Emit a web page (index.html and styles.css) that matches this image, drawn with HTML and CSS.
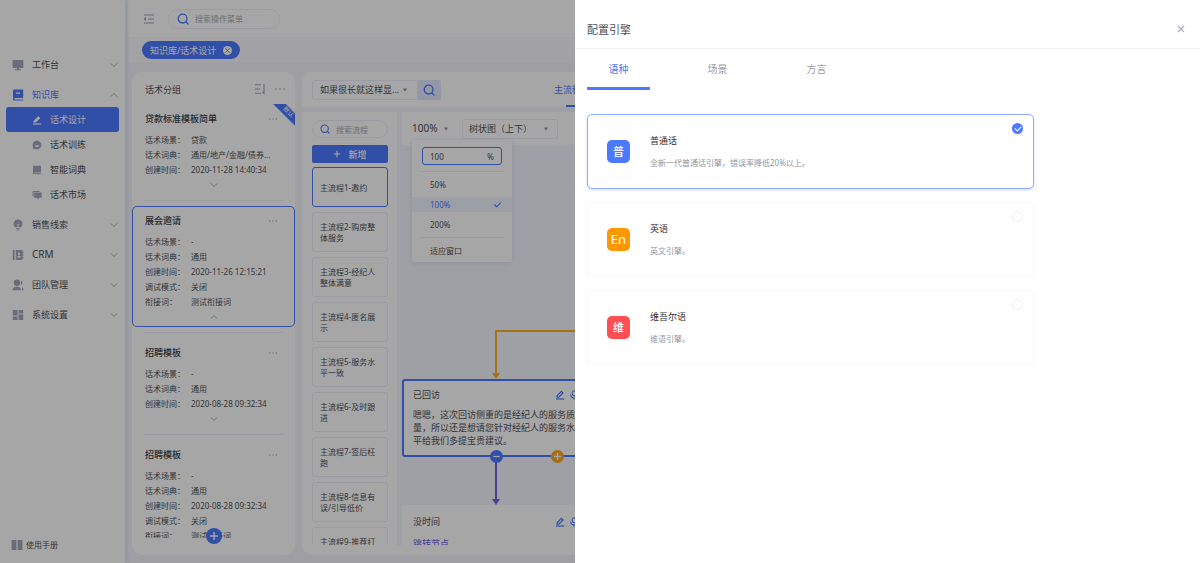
FILE: index.html
```html
<!DOCTYPE html>
<html lang="zh-CN">
<head>
<meta charset="utf-8">
<meta name="viewport" content="width=device-width, initial-scale=1">
<title>话术设计</title>
<link rel="stylesheet" href="styles.css">
</head>
<body>
<svg class="sprite" aria-hidden="true">
  <symbol id="i-down" viewBox="0 0 10 10"><path d="M2 3.5l3 3 3-3" fill="none" stroke="currentColor" stroke-width="1"/></symbol>
  <symbol id="i-up" viewBox="0 0 10 10"><path d="M2 6.5l3-3 3 3" fill="none" stroke="currentColor" stroke-width="1"/></symbol>
  <symbol id="i-search" viewBox="0 0 12 12"><circle cx="5.6" cy="5.6" r="4.4" fill="none" stroke="currentColor" stroke-width="1.3"/><path d="M9 9l2 2" stroke="currentColor" stroke-width="1.3" stroke-linecap="round"/></symbol>
  <symbol id="i-edit" viewBox="0 0 10 10"><path d="M1.5 6L6.3 1.2 8.3 3.2 3.8 7.6H1.5z" fill="currentColor"/><path d="M1 9h8.2" stroke="currentColor" stroke-width="1.2"/></symbol>
  <symbol id="i-pen" viewBox="0 0 10 10"><path d="M2 5.8L6.4 1.4 8 3 3.8 7.2H2z" fill="none" stroke="currentColor" stroke-width="1.2"/><path d="M1 9h8.2" stroke="currentColor" stroke-width="1.2"/></symbol>
  <symbol id="i-mic" viewBox="0 0 10 10"><rect x="3.3" y=".8" width="3.4" height="5" rx="1.7" fill="none" stroke="currentColor"/><path d="M1.5 4.5a3.5 3.5 0 007 0M5 8v1.6" fill="none" stroke="currentColor"/></symbol>
  <symbol id="i-dots" viewBox="0 0 12 4"><circle cx="2" cy="2" r=".8" fill="currentColor"/><circle cx="6" cy="2" r=".8" fill="currentColor"/><circle cx="10" cy="2" r=".8" fill="currentColor"/></symbol>
  <symbol id="i-caret" viewBox="0 0 6 4"><path d="M.8.6h4.4L3 3.4z" fill="currentColor"/></symbol>
  <symbol id="i-plus" viewBox="0 0 10 10"><path d="M5 1v8M1 5h8" stroke="currentColor" stroke-width="1.4"/></symbol>
  <symbol id="i-x" viewBox="0 0 10 10"><path d="M2 2l6 6M8 2l-6 6" stroke="currentColor" stroke-width="1.3"/></symbol>
  <symbol id="i-check" viewBox="0 0 10 10"><path d="M1.5 5l2.6 2.6 4.6-4.8" fill="none" stroke="currentColor" stroke-width="1.2"/></symbol>
</svg>

<div class="app">
  <aside class="sidebar">
    <nav class="nav">
      <a class="nav-row" href="#"><svg class="nav-icon" viewBox="0 0 12 12"><path d="M1.4 1h9.2a.8.8 0 01.8.8v6.4a.8.8 0 01-.8.8H7v1.2h2v1H3v-1h2V9H1.4a.8.8 0 01-.8-.8V1.8a.8.8 0 01.8-.8z" fill="currentColor"/></svg><span>工作台</span><svg class="chev"><use href="#i-down"/></svg></a>
      <a class="nav-row open" href="#"><svg class="nav-icon" viewBox="0 0 12 12"><path d="M2.4.6h8.800v8.400H2.600v1.400h8.600v1.200H2.400A1.400 1.400 0 011 10.200V2A1.400 1.400 0 012.400.6zM4 3.600v1.200h4V3.600z" fill="currentColor" fill-rule="evenodd"/></svg><span>知识库</span><svg class="chev"><use href="#i-up"/></svg></a>
      <div class="subnav">
        <a class="sub-row active" href="#"><svg class="sub-icon"><use href="#i-edit"/></svg>话术设计</a>
        <a class="sub-row" href="#"><svg class="sub-icon" viewBox="0 0 10 10"><path d="M5 .6a4.4 4.4 0 11-2.4 8.1L.8 9.2l.4-2A4.4 4.4 0 015 .6zM3 5.2a2.1 2.1 0 004.2 0z" fill="currentColor" fill-rule="evenodd"/></svg>话术训练</a>
        <a class="sub-row" href="#"><svg class="sub-icon" viewBox="0 0 10 10"><path d="M2 .8h7v6.6H2.2v.9H9v1H2A1 1 0 011 8.200V1.800A1 1 0 012 .8z" fill="currentColor"/></svg>智能词典</a>
        <a class="sub-row" href="#"><svg class="sub-icon" viewBox="0 0 10 10"><path d="M.6 1h7v1H1.600v4.500H.6z" fill="currentColor"/><path d="M2.200 2.600h7.400v5.200H7.200L6 9.200 4.800 7.800H2.200z" fill="currentColor"/></svg>话术市场</a>
      </div>
      <a class="nav-row" href="#"><svg class="nav-icon" viewBox="0 0 12 12"><path d="M6 .4a4.300 4.300 0 012.400 7.900H6.500V6l1-.9-.5-.5-1 .8-1-.8-.5.5 1 .9v2.300H3.600A4.300 4.300 0 016 .4zM4 9.200h4v1H4zM5 10.700h2v.8H5z" fill="currentColor"/></svg><span>销售线索</span><svg class="chev"><use href="#i-down"/></svg></a>
      <a class="nav-row" href="#"><svg class="nav-icon" viewBox="0 0 12 12"><path d="M.8 1h1.800v10H.8zM3.800 1h6.400v1.600h1.200v1.600h-1.200v1h1.200v1.600h-1.200v1h1.200v1.600h-1.200V11H3.800zM7 3.600a1.200 1.200 0 100 2.400 1.200 1.200 0 000-2.400zM5 8.400h4c0-2.200-4-2.200-4 0z" fill="currentColor" fill-rule="evenodd"/></svg><span class="latin">CRM</span><svg class="chev"><use href="#i-down"/></svg></a>
      <a class="nav-row" href="#"><svg class="nav-icon" viewBox="0 0 12 12"><circle cx="5" cy="3.800" r="3.200" fill="currentColor"/><path d="M.6 11.200C.6 6.400 9 6.400 9 11.200zM9 1.600c1.800 1 1.800 3.600 0 4.600zM9.600 8c1.400.6 2 1.800 2 3.200h-1.400z" fill="currentColor"/></svg><span>团队管理</span><svg class="chev"><use href="#i-down"/></svg></a>
      <a class="nav-row" href="#"><svg class="nav-icon" viewBox="0 0 12 12"><path d="M.8 1h4.800v5.400H.8zM6.600 1h4.600v3.400H6.600zM.8 7.400h4.800V11H.8zM6.600 5.400h4.600V11H6.600z" fill="currentColor"/></svg><span>系统设置</span><svg class="chev"><use href="#i-down"/></svg></a>
    </nav>
    <a class="manual" href="#"><svg class="nav-icon" viewBox="0 0 12 12"><path d="M.6 1h4.800v10.400L4.600 11h-4zM6.600 1h4.800v10h-4l-.8.4z" fill="currentColor"/></svg>使用手册</a>
  </aside>

  <div class="main">
    <header class="topbar">
      <button class="plain" aria-label="收起菜单"><svg class="menu-icon" viewBox="0 0 12 12"><path d="M1 2h10M5 6h6M1 10h10M1 6h2" fill="none" stroke="currentColor" stroke-width="1.100"/><path d="M3 3.800v4.400L.8 6z" fill="currentColor"/></svg></button>
      <label class="search top-search"><svg class="search-icon"><use href="#i-search"/></svg><input type="text" placeholder="搜索操作菜单" aria-label="搜索操作菜单"></label>
    </header>
    <div class="tagbar"><span class="tag">知识库/话术设计<button class="tag-close" aria-label="关闭"><svg><use href="#i-x"/></svg></button></span></div>

    <div class="content">
      <section class="groups">
        <div class="groups-head"><h2>话术分组</h2>
          <button class="plain" aria-label="排序"><svg class="sort-icon" viewBox="0 0 12 12"><path d="M1 1.800h6M1 6h5M1 10.200h6M10 1v9.600L8.200 8.800" fill="none" stroke="currentColor" stroke-width="1.100"/></svg></button>
          <button class="plain" aria-label="更多"><svg class="dots"><use href="#i-dots"/></svg></button>
        </div>
        <div class="group-list">
          <article class="group">
            <span class="ribbon">默认</span>
            <div class="group-title"><h3>贷款标准模板简单</h3><button class="plain" aria-label="更多"><svg class="dots small"><use href="#i-dots"/></svg></button></div>
            <dl><dt>话术场景：</dt><dd>贷款</dd><dt>话术词典：</dt><dd>通用/地产/金融/债券...</dd><dt>创建时间：</dt><dd>2020-11-28 14:40:34</dd></dl>
            <button class="toggle" aria-label="展开"><svg class="chev"><use href="#i-down"/></svg></button>
          </article>
          <hr>
          <article class="group selected">
            <div class="group-title"><h3>展会邀请</h3><button class="plain" aria-label="更多"><svg class="dots small"><use href="#i-dots"/></svg></button></div>
            <dl><dt>话术场景：</dt><dd>-</dd><dt>话术词典：</dt><dd>通用</dd><dt>创建时间：</dt><dd>2020-11-26 12:15:21</dd><dt>调试模式：</dt><dd>关闭</dd><dt>衔接词：</dt><dd>测试衔接词</dd></dl>
            <button class="toggle" aria-label="收起"><svg class="chev"><use href="#i-up"/></svg></button>
          </article>
          <hr>
          <article class="group">
            <div class="group-title"><h3>招聘模板</h3><button class="plain" aria-label="更多"><svg class="dots small"><use href="#i-dots"/></svg></button></div>
            <dl><dt>话术场景：</dt><dd>-</dd><dt>话术词典：</dt><dd>通用</dd><dt>创建时间：</dt><dd>2020-08-28 09:32:34</dd></dl>
            <button class="toggle" aria-label="展开"><svg class="chev"><use href="#i-down"/></svg></button>
          </article>
          <hr>
          <article class="group">
            <div class="group-title"><h3>招聘模板</h3><button class="plain" aria-label="更多"><svg class="dots small"><use href="#i-dots"/></svg></button></div>
            <dl><dt>话术场景：</dt><dd>-</dd><dt>话术词典：</dt><dd>通用</dd><dt>创建时间：</dt><dd>2020-08-28 09:32:34</dd><dt>调试模式：</dt><dd>关闭</dd><dt>衔接词：</dt><dd>测试衔接词</dd></dl>
          </article>
        </div>
        <button class="add-group" aria-label="新增分组"><svg><use href="#i-plus"/></svg></button>
      </section>

      <section class="designer">
        <div class="designer-head">
          <button class="combo">如果很长就这样显...<svg class="caret"><use href="#i-caret"/></svg></button><button class="combo-search" aria-label="搜索"><svg class="search-icon"><use href="#i-search"/></svg></button>
          <a class="designer-tab" href="#">主流程设计</a>
        </div>
        <div class="designer-body">
          <div class="flows">
            <label class="search flow-search"><svg class="search-icon"><use href="#i-search"/></svg><input type="text" placeholder="搜索流程" aria-label="搜索流程"></label>
            <button class="new-flow"><svg><use href="#i-plus"/></svg>新增</button>
            <div class="flow-list">
              <button class="flow current">主流程1-邀约</button>
              <button class="flow">主流程2-购房整体服务</button>
              <button class="flow">主流程3-经纪人整体满意</button>
              <button class="flow">主流程4-匿名展示</button>
              <button class="flow">主流程5-服务水平一致</button>
              <button class="flow">主流程6-及时跟进</button>
              <button class="flow">主流程7-签后枉跑</button>
              <button class="flow">主流程8-信息有误/引导低价</button>
              <button class="flow">主流程9-推荐打分</button>
            </div>
          </div>
          <div class="stage">
            <div class="stage-bar">
              <div class="zoom">
                <button class="zoom-button">100%<svg class="caret"><use href="#i-caret"/></svg></button>
                <div class="zoom-menu">
                  <label class="zoom-input"><input type="text" value="100" aria-label="缩放比例"><span>%</span></label>
                  <hr>
                  <button class="zoom-option">50%</button>
                  <button class="zoom-option chosen">100%<svg><use href="#i-check"/></svg></button>
                  <button class="zoom-option">200%</button>
                  <hr>
                  <button class="zoom-option">适应窗口</button>
                </div>
              </div>
              <button class="combo layout-combo">树状图（上下）<svg class="caret"><use href="#i-caret"/></svg></button>
            </div>
            <div class="canvas">
              <svg class="edges" width="400" height="400" viewBox="0 0 400 400" aria-hidden="true">
                <path d="M400 186H94v43" fill="none" stroke="#ffb11f" stroke-width="2"/><path d="M90 228h8l-4 6z" fill="#ffb11f"/>
                <path d="M94 316v40" fill="none" stroke="#7062dc" stroke-width="2"/><path d="M90 354h8l-4 6z" fill="#7062dc"/>
              </svg>
              <div class="node node-visited">
                <div class="node-head"><h3>已回访</h3><svg><use href="#i-pen"/></svg><svg><use href="#i-mic"/></svg></div>
                <p>嗯嗯，这次回访侧重的是经纪人的服务质量，所以还是想请您针对经纪人的服务水平给我们多提宝贵建议。</p>
              </div>
              <button class="port port-minus" aria-label="收起"><svg viewBox="0 0 10 10"><path d="M1.500 5h7" stroke="currentColor" stroke-width="1.400"/></svg></button>
              <button class="port port-plus" aria-label="新增"><svg><use href="#i-plus"/></svg></button>
              <div class="node node-busy">
                <div class="node-head"><h3>没时间</h3><svg><use href="#i-pen"/></svg><svg><use href="#i-mic"/></svg></div>
                <a class="jump" href="#">跳转节点</a>
              </div>
            </div>
          </div>
        </div>
      </section>
    </div>
  </div>
</div>

<div class="mask"></div>
<section class="drawer" role="dialog" aria-labelledby="drawer-title">
  <header class="drawer-head"><h1 id="drawer-title">配置引擎</h1><button class="close" aria-label="关闭"><svg><use href="#i-x"/></svg></button></header>
  <div class="tabs" role="tablist">
    <button class="tab on" role="tab" aria-selected="true">语种</button>
    <button class="tab" role="tab" aria-selected="false">场景</button>
    <button class="tab" role="tab" aria-selected="false">方言</button>
  </div>
  <div class="engines">
    <label class="engine"><span class="badge blue">普</span><span class="engine-text"><strong>普通话</strong><small>全新一代普通话引擎，错误率降低20%以上。</small></span><input type="radio" name="engine" checked></label>
    <label class="engine"><span class="badge orange">En</span><span class="engine-text"><strong>英语</strong><small>英文引擎。</small></span><input type="radio" name="engine"></label>
    <label class="engine"><span class="badge red">维</span><span class="engine-text"><strong>维吾尔语</strong><small>维语引擎。</small></span><input type="radio" name="engine"></label>
  </div>
</section>
</body>
</html>
```
FILE: styles.css
```css
:root {
  --blue: #4c7aff;
  --line: #eef0fb;
  --text: #505258;
  --icon: #a2a6bd;
}
* { box-sizing: border-box; }
body {
  margin: 0;
  overflow: hidden;
  color: var(--text);
  font: 9px/15px "Noto Sans", "Noto Sans CJK SC", sans-serif;
}
button, input { font: inherit; color: inherit; margin: 0; }
button { padding: 0; border: 0; background: none; }
a { color: inherit; text-decoration: none; }
h1, h2, h3, p, dl, dd { margin: 0; font-weight: 400; font-size: inherit; }
hr { margin: 0; border: 0; border-top: 1px solid var(--line); }
svg { display: block; flex: none; }
.sprite { position: absolute; width: 0; height: 0; }
.plain { color: var(--icon); }

.app { display: flex; height: 100vh; background: #f4f5fb; }

/* Sidebar */
.sidebar {
  z-index: 1;
  flex: none;
  display: flex;
  flex-direction: column;
  width: 125px;
  padding: 47px 6px 11px;
  background: #fff;
  box-shadow: 3px 0 2px #e0e9f8;
}
.nav { flex: 1; }
.nav-row {
  display: flex;
  align-items: center;
  gap: 8px;
  height: 25px;
  margin-top: 5px;
  padding-left: 6px;
}
.nav-row .chev { margin-left: auto; }
.nav-row.open { color: var(--blue); }
.nav-icon { width: 12px; height: 12px; color: var(--icon); }
.open .nav-icon { color: var(--blue); }
.chev { width: 10px; height: 10px; color: var(--icon); }
.latin { font-size: 10px; }
.sub-row {
  display: flex;
  align-items: center;
  gap: 8px;
  height: 25px;
  padding-left: 26px;
  border-radius: 3px;
}
.sub-icon { width: 10px; height: 10px; color: var(--icon); }
.sub-row.active { background: var(--blue); color: #fff; }
.active .sub-icon { color: #fff; }
.manual { display: flex; align-items: center; gap: 3px; padding-left: 5px; font-size: 8px; }

/* Top area */
.main { flex: 1; min-width: 0; display: flex; flex-direction: column; }
.topbar { display: flex; align-items: center; gap: 13px; height: 38px; padding-left: 18px; background: #fff; border-bottom: 1px solid #f8f9fc; }
.menu-icon { width: 12px; height: 12px; }
.search {
  display: flex;
  align-items: center;
  gap: 6px;
  height: 20px;
  border: 1px solid var(--line);
  border-radius: 10px;
  background: #fff;
}
.search input { width: 100%; min-width: 0; border: 0; padding: 0; background: none; font-size: 8px; outline: 0; }
.search input::placeholder { color: #a8abb3; }
.search-icon { width: 12px; height: 12px; color: var(--blue); }
.top-search { width: 112px; padding: 0 8px; }
.tagbar { display: flex; align-items: center; height: 24px; padding-left: 17px; background: #fbfbfe; }
.tag {
  display: flex;
  align-items: center;
  gap: 7px;
  height: 18px;
  padding: 0 8px;
  border-radius: 9px;
  background: var(--blue);
  color: #fff;
}
.tag-close { width: 9px; height: 9px; padding: 1px; border-radius: 50%; background: #fff; color: var(--blue); }
.tag-close svg { width: 7px; height: 7px; }

.content { flex: 1; min-height: 0; display: flex; gap: 7px; padding: 10px 0 8px 7px; }

/* Script groups */
.groups {
  position: relative;
  flex: none;
  display: flex;
  flex-direction: column;
  width: 163px;
  padding-bottom: 17px;
  border-radius: 10px;
  background: #fff;
}
.groups-head { display: flex; align-items: center; gap: 8px; height: 32px; padding: 2px 9px 0 13px; }
.groups-head h2 { flex: 1; }
.sort-icon { width: 12px; height: 12px; }
.dots { width: 12px; height: 4px; }
.dots.small { width: 10px; }
.group-list { flex: 1; min-height: 0; overflow: hidden; }
.group-list hr { margin: 5px 12px; }
.group { position: relative; padding: 7px 12px 3px 13px; overflow: hidden; }
.group.selected { box-shadow: inset 0 0 0 1px var(--blue); border-radius: 5px; }
.group-title { display: flex; justify-content: space-between; align-items: center; height: 15px; padding-right: 5px; margin-bottom: 6px; }
.group-title h3 { font-weight: 500; color: #404247; }
.group dl { display: grid; grid-template-columns: 46px 1fr; font-size: 8px; }
.group dt, .group dd { white-space: nowrap; }
.toggle { display: block; height: 15px; margin: 0 auto; }
.ribbon {
  position: absolute;
  top: 4px;
  right: -20px;
  width: 54px;
  height: 9px;
  background: var(--blue);
  color: #fff;
  font-size: 6px;
  line-height: 9px;
  text-align: center;
  transform: rotate(45deg);
}
.add-group {
  position: absolute;
  left: 74px;
  bottom: 11px;
  width: 16px;
  height: 16px;
  padding: 3px;
  border-radius: 50%;
  background: var(--blue);
  color: #fff;
}
.add-group svg { width: 10px; height: 10px; }

/* Designer */
.designer {
  flex: 1;
  min-width: 0;
  display: flex;
  flex-direction: column;
  gap: 5px;
  padding-bottom: 10px;
  border-radius: 10px 0 0 10px;
  background: linear-gradient(#fff, #fff) bottom / 100% 10px no-repeat, #f3f4fa;
  overflow: hidden;
}
.designer-head { display: flex; align-items: center; height: 35px; padding-left: 10px; background: #fff; }
.combo { display: flex; align-items: center; gap: 3px; height: 20px; border: 1px solid var(--line); border-radius: 2px; background: #fff; white-space: nowrap; }
.designer-head .combo { width: 106px; padding-left: 7px; }
.caret { width: 6px; height: 4px; color: #92959f; }
.combo-search { width: 23px; height: 20px; padding: 4px 5px; border-radius: 0 2px 2px 0; background: #e3e9ff; }
.designer-tab { display: flex; align-items: center; height: 100%; margin-left: 113px; color: var(--blue); background: linear-gradient(var(--blue), var(--blue)) bottom / 22px 2px no-repeat; }
.designer-body { flex: 1; min-height: 0; display: flex; }
.flows { flex: none; display: flex; flex-direction: column; width: 95px; padding: 8px 9px 0 10px; background: #fff; }
.flow-search { height: 18px; padding: 0 7px; flex: none; }
.flow-search .search-icon { width: 10px; height: 10px; }
.new-flow { display: flex; flex: none; align-items: center; justify-content: center; gap: 7px; height: 18px; margin: 7px 0 4px; border-radius: 2px; background: var(--blue); color: #fff; font-weight: 500; }
.new-flow svg { width: 8px; height: 8px; }
.flow-list { flex: 1; min-height: 0; display: flex; flex-direction: column; gap: 5px; overflow: hidden; }
.flow { flex: none; height: 40px; padding: 0 7px; border: 1px solid var(--line); border-radius: 3px; font-size: 8px; line-height: 11px; text-align: left; }
.flow.current { border-color: var(--blue); }

.stage { flex: 1; min-width: 0; display: flex; flex-direction: column; padding-left: 5px; background: #f3f6ff; }
.stage-bar { display: flex; align-items: center; gap: 10px; height: 33px; padding-left: 10px; background: #fff; }
.zoom { position: relative; width: 40px; }
.zoom-button { display: flex; align-items: center; gap: 6px; font-size: 10px; }
.layout-combo { width: 96px; padding: 0 8px 0 6px; justify-content: space-between; }
.zoom-menu {
  position: absolute;
  z-index: 2;
  top: 19px;
  left: 0;
  width: 100px;
  padding: 7px 0 4px;
  border-radius: 2px;
  background: #fff;
  box-shadow: 0 1px 5px #dbdfee;
  font-size: 8px;
}
.zoom-input { display: flex; align-items: center; height: 18px; margin: 0 10px 6px; padding: 0 7px; border: 1px solid var(--blue); border-radius: 3px; }
.zoom-input input { flex: 1; min-width: 0; padding: 0; border: 0; outline: 0; }
.zoom-menu hr { margin: 0 8px 5px; }
.zoom-option { display: flex; justify-content: space-between; align-items: center; width: 100%; height: 15px; margin-bottom: 5px; padding: 0 10px 0 18px; }
.zoom-option:last-child { margin-bottom: 0; }
.zoom-option svg { width: 9px; height: 9px; }
.zoom-option.chosen { background: #f2f5ff; color: var(--blue); }

.canvas { position: relative; flex: 1; min-height: 0; overflow: hidden; }
.edges { position: absolute; left: 0; top: 0; }
.node { position: absolute; left: 0; width: 188px; padding: 8px 9px; border: 2px solid transparent; border-radius: 3px; background: #fff; }
.node-visited { top: 234px; height: 78px; border-color: var(--blue); padding: 6px 9px; }
.node-busy { top: 360px; height: 80px; padding: 7px 9px; }
.node p { margin-top: 6px; line-height: 13px; }
.node-head { display: flex; align-items: center; gap: 4px; }
.node-head h3 { width: 139px; }
.node-head svg { width: 10px; height: 10px; color: var(--blue); }
.jump { display: block; margin-top: 7px; color: #7062dc; }
.port { position: absolute; top: 305px; width: 13px; height: 13px; padding: 2px; border-radius: 50%; color: #fff; }
.port svg { width: 9px; height: 9px; }
.port-minus { left: 88px; background: var(--blue); }
.port-plus { left: 149px; background: #ffa81f; }

/* Mask and drawer */
.mask { position: fixed; z-index: 10; inset: 0; background: rgba(0, 0, 0, .35); }
.drawer { position: fixed; z-index: 11; inset: 0 0 0 auto; width: 625px; max-width: 100%; background: #fff; overflow: auto; }
.drawer-head { display: flex; justify-content: space-between; align-items: flex-end; height: 49px; padding: 0 14px 11px 12px; border-bottom: 1px solid #f0f1f3; font-size: 11px; }
.close { color: #a9adb9; }
.close svg { width: 10px; height: 10px; margin-bottom: 3px; }
.tabs { display: flex; gap: 36px; padding: 0 12px; }
.tab { width: 63px; height: 41px; padding-top: 2px; border-bottom: 3px solid transparent; font-size: 10px; color: #999ca3; }
.tab.on { color: var(--blue); border-color: var(--blue); border-radius: 1px; }
.engines { display: grid; gap: 13px; max-width: 471px; padding: 24px 12px; }
.engine { display: flex; align-items: center; gap: 20px; height: 75px; padding: 0 10px 0 19px; border: 1px solid #f6f7ff; border-radius: 5px; }
.engine:has(:checked) { border-color: #8facff; box-shadow: 0 1px 3px #d3deff; }
.badge { width: 23px; height: 23px; border-radius: 5px; color: #fff; font-size: 11px; line-height: 23px; text-align: center; font-weight: 500; }
.badge.blue { background: var(--blue); }
.badge.orange { background: #ff9800; font-size: 13px; font-weight: 400; }
.badge.red { background: #ff4f52; }
.engine-text { flex: 1; display: flex; flex-direction: column; gap: 7px; }
.engine-text strong { font-weight: 400; color: #2f3136; }
.engine-text small { font-size: 8px; color: #93969d; }
.engine input { appearance: none; align-self: flex-start; width: 11px; height: 11px; margin-top: 8px; border: 1px solid #eceded; border-radius: 50%; }
.engine input:checked { border: 0; background: var(--blue); }
.engine input:checked::before { content: ""; display: block; width: 5px; height: 3px; margin: 3px; border: solid #fff; border-width: 0 0 1px 1px; transform: rotate(-45deg); }
```
